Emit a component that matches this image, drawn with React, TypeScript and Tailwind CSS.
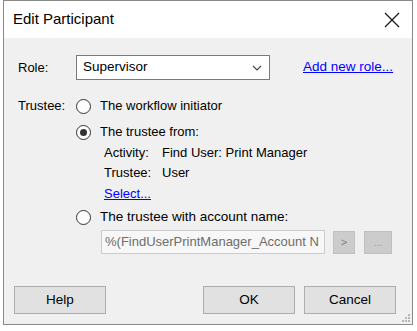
import { useState } from "react";

function Radio({ checked }: { checked?: boolean }) {
    return (
        <span className="w-[15px] h-[15px] rounded-full border border-[#333333] bg-white flex items-center justify-center shrink-0">
            {checked && <span className="w-[7px] h-[7px] rounded-full bg-[#333333]" />}
        </span>
    );
}

function Button({ label }: { label: string }) {
    return (
        <button className="w-[92px] h-[28px] bg-[#e1e1e1] border border-[#adadad] text-[13.5px] text-black">
            {label}
        </button>
    );
}

export default function App() {
    const [choice] = useState(1);

    return (
        <div className="w-[417px] h-[331px] bg-white overflow-hidden" style={{ fontFamily: "'Liberation Sans', Arial, sans-serif" }}>
            <div className="ml-[3px] w-[410px] h-[325px] border border-[#8a8a8a] flex flex-col">
                {/* Title bar */}
                <div className="h-[37px] bg-white flex items-center justify-between pl-[9px] pr-[12px] shrink-0">
                    <span className="text-[15px] text-black">Edit Participant</span>
                    <svg width="16" height="16" viewBox="0 0 16 16">
                        <path d="M1 1L15 15M15 1L1 15" stroke="#1a1a1a" strokeWidth="1.3" fill="none" />
                    </svg>
                </div>

                {/* Body */}
                <div className="flex-1 bg-[#f0f0f0] pt-[17px] pl-[14px] pr-[14px] flex flex-col text-[13px] text-black relative">
                    {/* Role row */}
                    <div className="h-[25px] flex items-center">
                        <span className="w-[58px]">Role:</span>
                        <div className="w-[194px] h-[25px] bg-white border border-[#7a7a7a] flex items-center justify-between pl-[6px] pr-[7px]">
                            <span className="text-[13.5px]">Supervisor</span>
                            <svg width="10" height="6" viewBox="0 0 10 6">
                                <path d="M1 1L5 5L9 1" stroke="#444" strokeWidth="1.1" fill="none" />
                            </svg>
                        </div>
                        <span className="ml-[33px] text-[#0000ff] underline text-[13.5px]">Add new role...</span>
                    </div>

                    {/* Trustee block */}
                    <div className="mt-[16px] flex">
                        <span className="w-[58px] h-[20px] flex items-center">Trustee:</span>
                        <div className="flex flex-col">
                            <div className="h-[20px] flex items-center gap-[9px]">
                                <Radio checked={choice === 0} />
                                <span>The workflow initiator</span>
                            </div>
                            <div className="mt-[6px] h-[20px] flex items-center gap-[9px]">
                                <Radio checked={choice === 1} />
                                <span>The trustee from:</span>
                            </div>
                            <div className="mt-[1px] pl-[28px] flex flex-col">
                                <div className="h-[20px] flex items-center">
                                    <span className="w-[58px]">Activity:</span>
                                    <span>Find User: Print Manager</span>
                                </div>
                                <div className="h-[20px] flex items-center">
                                    <span className="w-[58px]">Trustee:</span>
                                    <span>User</span>
                                </div>
                                <div className="mt-[1px] h-[20px] flex items-center">
                                    <span className="text-[#0000ff] underline">Select...</span>
                                </div>
                            </div>
                            <div className="mt-[3px] h-[20px] flex items-center gap-[9px]">
                                <Radio checked={choice === 2} />
                                <span className="text-[13.5px]">The trustee with account name:</span>
                            </div>
                            <div className="mt-[3px] pl-[25px] flex items-center">
                                <div className="w-[224px] h-[24px] bg-[#f7f7f7] border border-[#cccccc] flex items-center pl-[3px] overflow-hidden whitespace-nowrap text-[#6d6d6d]">
                                    %(FindUserPrintManager_Account N
                                </div>
                                <div className="ml-[8px] w-[22px] h-[23px] bg-[#cccccc] border border-[#bfbfbf] flex items-center justify-center text-[11px] text-[#838383]">
                                    &gt;
                                </div>
                                <div className="ml-[9px] w-[28px] h-[23px] bg-[#cccccc] border border-[#bfbfbf] flex items-center justify-center text-[10px] text-[#a0a0a0]">
                                    ...
                                </div>
                            </div>
                        </div>
                    </div>

                    {/* Buttons */}
                    <div className="mt-[32px] flex items-center">
                        <div className="-ml-[4px]">
                            <Button label="Help" />
                        </div>
                        <div className="ml-auto flex gap-[9px] mr-[2px]">
                            <Button label="OK" />
                            <Button label="Cancel" />
                        </div>
                    </div>

                    {/* Size grip */}
                    <svg className="absolute right-[2px] bottom-[2px]" width="10" height="10" viewBox="0 0 10 10">
                        <rect x="8" y="2" width="2" height="2" fill="#b8b8b8" />
                        <rect x="5" y="5" width="2" height="2" fill="#b8b8b8" />
                        <rect x="8" y="5" width="2" height="2" fill="#b8b8b8" />
                        <rect x="2" y="8" width="2" height="2" fill="#b8b8b8" />
                        <rect x="5" y="8" width="2" height="2" fill="#b8b8b8" />
                        <rect x="8" y="8" width="2" height="2" fill="#b8b8b8" />
                    </svg>
                </div>
            </div>
        </div>
    );
}
